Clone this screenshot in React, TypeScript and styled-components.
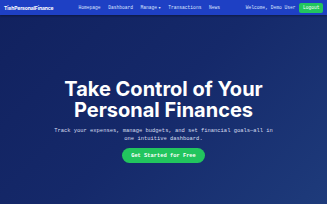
import styled, { createGlobalStyle } from "styled-components";

const GlobalStyle = createGlobalStyle`
  html, body {
    margin: 0;
    padding: 0;
    height: 100%;
  }
  #root {
    height: 100%;
  }
`;

const Page = styled.div`
  display: flex;
  flex-direction: column;
  height: 100vh;
  background: linear-gradient(135deg, #11215e 0%, #15296a 50%, #1e3b7b 100%);
`;

const Nav = styled.nav`
  display: flex;
  align-items: center;
  height: 15px;
  padding: 0 4px;
  background: #1e40c4;
  box-shadow: 0 1px 2px rgba(0, 0, 0, 0.35);
  font-family: "Liberation Mono", monospace;
  font-size: 4.6px;
  color: #dbe4ff;
`;

const Logo = styled.div`
  font-family: Inter, "Liberation Sans", sans-serif;
  font-weight: 700;
  font-size: 5px;
  color: #ffffff;
  letter-spacing: -0.1px;
`;

const Links = styled.div`
  display: flex;
  align-items: center;
  gap: 7.6px;
  margin-left: 25px;
`;

const NavLink = styled.a`
  color: #dbe4ff;
  text-decoration: none;
  display: flex;
  align-items: center;
  gap: 1.5px;
`;

const Caret = styled.span`
  font-size: 3.5px;
`;

const Right = styled.div`
  display: flex;
  align-items: center;
  gap: 4px;
  margin-left: auto;
`;

const Welcome = styled.span`
  color: #dbe4ff;
`;

const LogoutButton = styled.button`
  border: none;
  border-radius: 2px;
  background: #22c55e;
  color: #ffffff;
  font-family: "Liberation Mono", monospace;
  font-size: 4.6px;
  height: 10px;
  padding: 0 3.5px;
`;

const Hero = styled.main`
  flex: 1;
  display: flex;
  flex-direction: column;
  align-items: center;
  text-align: center;
  padding-top: 64px;
`;

const Title = styled.h1`
  margin: 0;
  font-family: Inter, "Liberation Sans", sans-serif;
  font-weight: 700;
  font-size: 20px;
  line-height: 21px;
  color: #ffffff;
`;

const Subtitle = styled.p`
  margin: 6px 0 0;
  width: 230px;
  font-family: "Liberation Mono", monospace;
  font-size: 5.45px;
  line-height: 8px;
  color: #d6ddf0;
`;

const CtaButton = styled.button`
  margin-top: 5px;
  height: 15px;
  padding: 0 9px;
  border: none;
  border-radius: 8px;
  background: #22c55e;
  color: #ffffff;
  font-family: "Liberation Mono", monospace;
  font-weight: 700;
  font-size: 5.4px;
`;

const navItems = ["Homepage", "Dashboard", "Manage", "Transactions", "News"];

export default function App() {
  return (
    <>
      <GlobalStyle />
      <Page>
        <Nav>
          <Logo>TishPersonalFinance</Logo>
          <Links>
            {navItems.map((item) => (
              <NavLink key={item} href="#">
                {item}
                {item === "Manage" && <Caret>▼</Caret>}
              </NavLink>
            ))}
          </Links>
          <Right>
            <Welcome>Welcome, Demo User</Welcome>
            <LogoutButton>Logout</LogoutButton>
          </Right>
        </Nav>
        <Hero>
          <Title>
            Take Control of Your
            <br />
            Personal Finances
          </Title>
          <Subtitle>
            Track your expenses, manage budgets, and set financial goals—all in one intuitive dashboard.
          </Subtitle>
          <CtaButton>Get Started for Free</CtaButton>
        </Hero>
      </Page>
    </>
  );
}
